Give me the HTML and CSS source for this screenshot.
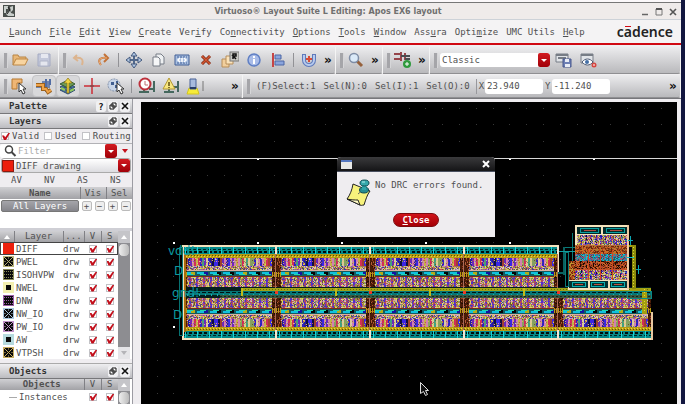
FILE: index.html
```html
<!DOCTYPE html>
<html lang="en">
<head>
<meta charset="utf-8">
<title>Virtuoso® Layout Suite L Editing: Apos EX6 layout</title>
<link rel="stylesheet" href="styles.css">
</head>
<body>
<div class="window">
  <header class="titlebar">
    <svg class="app-icon" width="12" height="12" viewBox="0 0 12 12"><rect width="12" height="12" fill="#4a4f4c"/><path d="M1 1h4v3H3v4H1zM7 2l3-1v4L8 7zM3 9l4-4 1 3 3 1v2H5z" fill="#c9cecb"/><path d="M5 2l2 3-3 4" stroke="#222" fill="none"/></svg>
    <h1>Virtuoso® Layout Suite L Editing: Apos EX6 layout</h1>
    <div class="win-buttons">
      <button aria-label="Minimize"><svg width="8" height="8"><path d="M1 6.500h6" stroke="#666" stroke-width="1.500"/></svg></button>
      <button aria-label="Maximize"><svg width="8" height="8"><path d="M1 1h6v6H1z" stroke="#777" fill="none"/><path d="M1 1h6" stroke="#555" stroke-width="2"/></svg></button>
      <button aria-label="Close window"><svg width="8" height="8"><path d="M1 1l6 6M7 1L1 7" stroke="#555" stroke-width="1.600"/></svg></button>
    </div>
  </header>
  <nav class="menubar">
    <button><u>L</u>aunch</button><button><u>F</u>ile</button><button><u>E</u>dit</button><button><u>V</u>iew</button><button><u>C</u>reate</button><button>Ver<u>i</u>fy</button><button>Co<u>n</u>nectivity</button><button><u>O</u>ptions</button><button><u>T</u>ools</button><button><u>W</u>indow</button><button>Ass<u>u</u>ra</button><button>Opti<u>m</u>ize</button><button>UMC Utils</button><button><u>H</u>elp</button>
    <span class="logo">c<span class="bar">a</span>dence</span>
  </nav>

  <div class="toolbar">
    <div class="group">
      <i class="grip"></i>
      <button aria-label="Open"><svg width="18" height="18"><path d="M2 14V4h5l1 2h7v3" fill="#e9b878" stroke="#b98545"/><path d="M2 14l3-6h12l-3 6z" fill="#f8d4a0" stroke="#bd8744"/></svg></button>
      <button aria-label="Save"><svg width="18" height="18"><path d="M3 3h12v12H3z" fill="#c3c8da" stroke="#a4aac2"/><path d="M6 3h7v4H6z" fill="#e6e8f0"/><path d="M5 10h8v5H5z" fill="#e4e6ee" stroke="#b0b5c8"/></svg></button>
    </div>
    <div class="group">
      <i class="grip"></i>
      <button aria-label="Undo"><svg width="18" height="18"><path d="M7 4L4 7l4 3M5 7c6-1 9 1 7 7" fill="none" stroke="#dcb48e" stroke-width="2"/></svg></button>
      <button aria-label="Redo"><svg width="18" height="18"><path d="M10 3l4 4-4 4M13 7C6 6 3 9 7 14" fill="none" stroke="#c27238" stroke-width="2"/><path d="M13 7C6 6 3 9 7 14" fill="none" stroke="#f1b27a"/></svg></button>
      <i class="sep"></i>
      <button aria-label="Move"><svg width="18" height="18"><path d="M9 2v14M2 9h14" stroke="#52698c" stroke-width="2"/><path d="M9 1l3 4H6zM9 17l3-4H6zM1 9l4-3v6zM17 9l-4-3v6z" fill="#b2c8e4" stroke="#43597d"/></svg></button>
      <button aria-label="Copy"><svg width="18" height="18"><path d="M7 3h5l3 3v7H7z" fill="#eef0f2" stroke="#777d86"/><path d="M4 6h5l2 2v7H4z" fill="#f6f7f8" stroke="#777d86"/></svg></button>
      <button aria-label="Stretch"><svg width="18" height="18"><path d="M2 4h14v10H2z" fill="#a9bfe0" stroke="#415f96"/><path d="M4 6h10M4 12h10" stroke="#415f96" stroke-dasharray="2 1"/><path d="M7 7L5 9l2 2M11 7l2 2-2 2M9 7v4" fill="none" stroke="#fff" stroke-width="1.500"/></svg></button>
      <button aria-label="Delete"><svg width="18" height="18"><path d="M5 5l8 8M13 5l-8 8" stroke="#7e2613" stroke-width="3"/><path d="M5 5l8 8M13 5l-8 8" stroke="#d25832" stroke-width="1.500"/></svg></button>
      <button aria-label="Repeat copy"><svg width="18" height="18"><path d="M1 8h7v8H1z" fill="#f1cf9d" stroke="#b78e5b"/><path d="M5 5h7v8H5z" fill="#fae3bb" stroke="#b78e5b"/><rect x="9" y="1" width="9" height="9" fill="#c9c9c4" stroke="#777"/><path d="M12 8V3h3v2h-3l3 3" fill="none" stroke="#111" stroke-width="1.500"/></svg></button>
      <button aria-label="Properties"><svg width="18" height="18"><circle cx="9" cy="9" r="6" fill="#a9bce8" stroke="#5f7fc4" stroke-width="1.500"/><path d="M9 8v5M9 5v2" stroke="#fff" stroke-width="2"/></svg></button>
      <button aria-label="Align"><svg width="18" height="18"><path d="M4 2v14" stroke="#c64545" stroke-width="2"/><path d="M6 4h6v4H6zM6 10h9v4H6z" fill="#8aa4dc" stroke="#4d66a5"/></svg></button>
      <i class="sep"></i>
      <button aria-label="Snap"><svg width="18" height="18"><path d="M4 3v6a5 5 0 0 0 10 0V3" fill="none" stroke="#5f7abb" stroke-width="4"/><path d="M4 4v5a5 5 0 0 0 10 0V4" fill="none" stroke="#b8cbee" stroke-width="2"/><path d="M9 5v6M6 8h6" stroke="#d84b36" stroke-width="2"/></svg></button>
      <button class="more" aria-label="More edit tools">»</button>
    </div>
    <div class="group">
      <i class="grip"></i>
      <button aria-label="Zoom"><svg width="18" height="18"><path d="M10 10l5 5" stroke="#96613c" stroke-width="3"/><circle cx="7" cy="7" r="4.500" fill="#dbeaf8" stroke="#7e8da6" stroke-width="1.500"/></svg></button>
      <button class="more" aria-label="More zoom tools">»</button>
    </div>
    <div class="group">
      <i class="grip"></i>
      <button aria-label="Create wire"><svg width="20" height="18"><path d="M1 3h7M1 8h7M8 1v9M12 2v7" stroke="#96444a" stroke-width="2"/><path d="M8 5h9M12 8h5" stroke="#4a4d50" stroke-width="2"/><circle cx="14" cy="13" r="4" fill="#2f9a3d"/><path d="M14 11v4M12 13h4" stroke="#fff"/></svg></button>
      <button class="more" aria-label="More create tools">»</button>
    </div>
    <div class="group last">
      <i class="grip"></i>
      <label class="combo workspace"><select aria-label="Workspace"><option>Classic</option></select><span class="arrow"></span></label>
      <button aria-label="Save workspace"><svg width="18" height="18"><path d="M1 3h12v8H1z" fill="#e1e4e8" stroke="#777d86"/><path d="M1 4h12M3 7h8" stroke="#777d86" stroke-width="2"/><path d="M8 8h8v8H8z" fill="#6e80b5" stroke="#46578c"/><path d="M10 8h4v3h-4zM10 13h5v3h-5z" fill="#e9edf6"/></svg></button>
      <button aria-label="Hide workspace"><svg width="18" height="18"><path d="M2 3h12v9H2z" fill="#e1e4e8" stroke="#777d86"/><path d="M2 4h12" stroke="#777d86" stroke-width="2"/><path d="M3 11c3-4 8-4 11 0-3 4-8 4-11 0z" fill="#fff" stroke="#4d5b75"/><circle cx="8" cy="11" r="2" fill="#446fa6"/><circle cx="15" cy="14" r="2.500" fill="#d54741"/><path d="M14 14h2" stroke="#fff"/></svg></button>
    </div>
  </div>

  <div class="toolbar status">
    <div class="group modes">
      <i class="grip"></i>
      <button aria-label="Partial select"><svg width="20" height="18"><path d="M2 2h10v4H7v6H2z" fill="#efb675" stroke="#b67830"/><path d="M9 6v9l2-2 2 4 2-1-2-4h3z" fill="#fff" stroke="#333"/></svg></button>
      <button class="on" aria-label="Route mode"><svg width="20" height="18"><path d="M2 9h14M8 6h8" stroke="#7084ad" stroke-width="4"/><path d="M12 2v13M16 2v6" stroke="#526da4" stroke-width="2"/><path d="M2 8h7v4h3l2 3 3-2" fill="none" stroke="#9e621c" stroke-width="4"/><path d="M2 8h7v4h3l2 3 3-2" fill="none" stroke="#f0a44a" stroke-width="2"/></svg></button>
      <button class="on" aria-label="Stack mode"><svg width="20" height="18"><path d="M2 13l8-4 7 4-7 4zM2 10l8-4 7 4-7 4z" fill="#486f9d" stroke="#2c4b6e"/><path d="M2 7l8-4 7 4-7 4z" fill="#6c9a58" stroke="#365b31"/><path d="M9 16V6H6l4-5 4 5h-3v10z" fill="#f0d541" stroke="#8d7514" stroke-width=".7"/><path d="M3 11l4 2M12 14l4-2" stroke="#92cb5c" stroke-width="2"/></svg></button>
      <button aria-label="Crosshair"><svg width="20" height="18"><path d="M10 1v16M2 9h16" stroke="#cb2c36" stroke-width="1.500"/><path d="M8 9h4" stroke="#555"/></svg></button>
      <button aria-label="Area select"><svg width="20" height="18"><circle cx="8" cy="8" r="6" fill="#c8d5e8" stroke="#7f8fa8" stroke-dasharray="2 1"/><path d="M5 5h3v3H5zM9 8h3v3H9zM10 4h2v2h-2z" fill="#405f91"/><path d="M11 6v9l2-2 2 4 2-1-2-4h3z" fill="#fff" stroke="#333"/></svg></button>
      <i class="sep"></i>
      <button aria-label="DRC notify"><svg width="20" height="18"><path d="M2 15h10M7 11v4M12 12h5M17 4v11" stroke="#45685e" stroke-width="2"/><circle cx="8" cy="7" r="5.500" fill="#fff" stroke="#bd303b" stroke-width="2"/><path d="M8 4v4h3" stroke="#bd7075" fill="none"/></svg></button>
      <button aria-label="DRC warning"><svg width="20" height="18"><path d="M3 15h10M8 12v3M12 10h5M17 4v11" stroke="#45685e" stroke-width="2"/><path d="M8 1l6 11H2z" fill="#f7e780" stroke="#b59931"/><path d="M8 5v4M8 10v1" stroke="#5f4c10" stroke-width="1.500"/></svg></button>
      <button aria-label="Highlight"><svg width="20" height="18"><path d="M4 11h8l2 6H2z" fill="#f7ec38" stroke="#d4c51e"/><path d="M5 2h6v10H5z" fill="#a7badd" stroke="#4a6296"/><path d="M5 11h6" stroke="#283c69" stroke-width="2"/><path d="M18 4v10" stroke="#777"/></svg></button>
      <button class="more" aria-label="More modes">»</button>
    </div>
    <div class="group last readout">
      <i class="grip"></i>
      <span>(F)Select:1</span><span>Sel(N):0</span><span>Sel(I):1</span><span>Sel(O):0</span>
      <label class="coord"><span>X</span><input value="23.940"></label>
      <label class="coord y"><span>Y</span><input value="-11.240"></label>
      <button class="more end" aria-label="More readouts">»</button>
    </div>
  </div>

  <main class="workspace-area">
    <aside class="sidebar">
      <div class="dock-title"><h2>Palette</h2><button aria-label="Help">?</button><button aria-label="Float palette"><svg width="8" height="8"><path d="M3 1h4v4H3zM1 3h4v4H1z" fill="#fff" stroke="#111"/></svg></button><button aria-label="Close palette"><svg width="8" height="8"><path d="M1 1l6 6M7 1L1 7" stroke="#111" stroke-width="1.600"/></svg></button></div>
      <div class="dock-title"><h2>Layers</h2><button aria-label="Float layers"><svg width="8" height="8"><path d="M3 1h4v4H3zM1 3h4v4H1z" fill="#fff" stroke="#111"/></svg></button><button aria-label="Close layers"><svg width="8" height="8"><path d="M1 1l6 6M7 1L1 7" stroke="#111" stroke-width="1.600"/></svg></button></div>
      <div class="filters"><label><input type="checkbox" checked>Valid</label><label><input type="checkbox">Used</label><label><input type="checkbox">Routing</label></div>
      <div class="search">
        <label class="combo"><svg width="14" height="12"><circle cx="6" cy="4.500" r="3.500" fill="none" stroke="#444" stroke-width="1.500"/><path d="M8.500 7l4 4" stroke="#444" stroke-width="2"/></svg><input placeholder="Filter" aria-label="Filter"><span class="arrow"></span></label>
        <button class="small-arrow" aria-label="Filter options"></button>
      </div>
      <label class="combo current"><i class="swatch red"></i><select aria-label="Current layer"><option>DIFF drawing</option></select><span class="arrow"></span></label>
      <div class="quick"><button>AV</button><button>NV</button><button>AS</button><button>NS</button></div>
      <table class="sets">
        <thead><tr><th>Name</th><th colspan="2">Vis</th><th colspan="2">Sel</th></tr></thead>
        <tbody><tr><td><button class="all">All Layers</button></td><td><button aria-label="Show all">+</button></td><td><button aria-label="Hide all">−</button></td><td><button aria-label="Enable all">+</button></td><td><button aria-label="Disable all">−</button></td></tr></tbody>
      </table>
      <div class="list layers">
        <table>
          <thead><tr><th class="c-sw"><i class="sort"></i></th><th>Layer</th><th class="c-p">...</th><th class="c-v">V</th><th class="c-v">S</th></tr></thead>
          <tbody id="layer-rows"></tbody>
        </table>
        <div class="scroll"><i class="up"></i><i class="thumb"></i><i class="down"></i></div>
      </div>
      <div class="dock-title objects"><h2>Objects</h2><button aria-label="Float objects"><svg width="8" height="8"><path d="M3 1h4v4H3zM1 3h4v4H1z" fill="#fff" stroke="#111"/></svg></button><button aria-label="Close objects"><svg width="8" height="8"><path d="M1 1l6 6M7 1L1 7" stroke="#111" stroke-width="1.600"/></svg></button></div>
      <div class="list">
        <table>
          <thead><tr><th class="strong">Objects</th><th class="c-v">V</th><th class="c-v">S</th></tr></thead>
          <tbody><tr><td class="tree">Instances</td><td class="c-v"><input type="checkbox" checked aria-label="Instances visible"></td><td class="c-v"><input type="checkbox" checked aria-label="Instances selectable"></td></tr></tbody>
        </table>
        <div class="scroll"><i class="up"></i><i class="thumb"></i></div>
      </div>
    </aside>
    <section class="canvas">
      <svg id="layout" class="drawing" width="537" height="302" viewBox="141 102 537 302" shape-rendering="crispEdges"></svg>
      <div class="dialog" role="dialog" aria-label="DRC result">
        <div class="dialog-title">
          <svg width="11" height="9"><rect width="11" height="9" fill="#e9e9e6"/><rect width="11" height="2" fill="#5578c0"/></svg>
          <button aria-label="Close dialog"><svg width="8" height="8"><path d="M1 1l6 6M7 1L1 7" stroke="#fff" stroke-width="2"/></svg></button>
        </div>
        <div class="dialog-body">
          <svg width="26" height="28" viewBox="0 0 26 28"><path d="M7 5l17 7c-3 4-4 8-6 14-2 0-3 1-4 0L1 20C4 16 6 11 7 5z" fill="#f7f27c" stroke="#222"/><path d="M1 20c4 1 8 1 11 1l2 5z" fill="#fffbc4" stroke="#222"/><path d="M12 15l6-5" stroke="#666"/><ellipse cx="18" cy="11" rx="4.500" ry="3" fill="#258c91" stroke="#0c4a50"/><path d="M16 4h5l-1 7h-4z" fill="#2fa5a8"/><ellipse cx="18.500" cy="4" rx="4.500" ry="3" fill="#36a9ac" stroke="#0c4a50"/><path d="M16 3h3" stroke="#b3f0ee"/></svg>
          <p>No DRC errors found.</p>
          <button class="close"><u>C</u>lose</button>
        </div>
      </div>
    </section>
  </main>
</div>
<script src="layout.js"></script>
</body>
</html>
```
FILE: styles.css
```css
* { box-sizing: border-box; }
body {
  margin: 0;
  background: #12163f;
  color: #505050;
  font: 9px/12px "DejaVu Sans Mono", "Liberation Mono", monospace;
}
button, input, select { font: inherit; color: inherit; margin: 0; padding: 0; border: 0; background: none; border-radius: 0; }
button svg, .app-icon { display: block; }
h1, h2, p { margin: 0; }
.window {
  display: flex;
  flex-direction: column;
  height: 100vh;
  margin-right: 4px;
  background: #efedf0;
  border-top: 2px solid #fbf8fa;
  overflow: hidden;
}
.titlebar {
  display: flex;
  align-items: center;
  flex: none;
  height: 18px;
  padding: 0 4px 0 3px;
  border-top: 1px solid #777;
  border-bottom: 1px solid #cdd2d8;
  background: #efebea;
}
.titlebar h1 { flex: 1; text-align: center; color: #707070; font: bold 8px/14px "DejaVu Sans", sans-serif; padding: 2px 0 0 0; }
.win-buttons { display: flex; gap: 6px; padding-top: 2px; }
.menubar {
  display: flex;
  align-items: center;
  flex: none;
  gap: 8px;
  height: 25px;
  padding: 0 8px 0 9px;
  border-bottom: 2px solid #d00812;
  background: #f4f3f4;
  white-space: nowrap;
}
.menubar u { text-underline-offset: 1px; }
.logo { margin-left: auto; color: #222; font: 600 14px/20px "Noto Sans", sans-serif; }
.bar { position: relative; }
.bar::before { content: ""; position: absolute; top: 4px; left: 1px; width: 6px; height: 1px; background: #d00812; }

.toolbar { display: flex; flex: none; height: 29px; padding-top: 2px; background: #f0eff1; }
.toolbar.status { height: 24px; padding-top: 1px; }
.group {
  display: flex;
  align-items: center;
  padding: 0 2px 0 4px;
  border-right: 1px solid #f4f4f4;
  border-bottom: 1px solid #8f8f92;
  border-radius: 0 0 3px 0;
  background: linear-gradient(#ececee, #b9b9bc);
}
.group.last { flex: 1; }
.group button { display: grid; place-items: center; flex: none; width: 24px; height: 22px; }
.group .more { width: 14px; margin-left: auto; color: #111; font: bold 12px/14px "DejaVu Sans", sans-serif; }
.group button.on { background: #d8d8da; border: 1px solid #c3c3c6; border-radius: 4px; }
.grip { flex: none; width: 4px; height: 15px; background: #a5a5a9; border-right: 1px solid #d6d6d8; }
.sep { flex: none; width: 1px; height: 14px; margin: 0 3px; background: #929296; }
.modes { width: 243px; }
.readout > span { margin-left: 2px; margin-right: 6px; }
.readout > span:first-of-type { margin-left: 5px; }
.coord { display: flex; align-items: center; gap: 1px; padding-left: 2px; border-left: 1px solid #98989c; }
.coord.y { border: 0; padding-left: 2px; }
.coord input { width: 58px; height: 15px; padding-left: 2px; background: #fff; border-radius: 3px; }

.combo { display: flex; align-items: center; min-width: 0; background: #fff; border-radius: 3px; overflow: hidden; }
.combo select, .combo input { flex: 1; min-width: 0; height: 100%; appearance: none; outline: 0; }
.arrow { display: grid; place-items: center; flex: none; align-self: stretch; width: 12px; background: linear-gradient(#d21a20, #a00008); border-radius: 2px; }
.arrow::before { content: ""; border: 3px solid transparent; border-top: 3px solid #fff; border-bottom: 0; }
.group:nth-child(-n+4) .more { margin-right: -2px; }
.workspace { width: 110px; height: 14px; margin: 0 2px; }
.workspace select { padding-left: 2px; }

.workspace-area { display: flex; flex: 1; min-height: 0; border-top: 1px solid #77777b; }
.sidebar {
  display: flex;
  flex-direction: column;
  flex: none;
  width: 133px;
  border-right: 1px solid #9c9ca3;
  overflow: hidden;
}
.dock-title {
  display: flex;
  align-items: center;
  flex: none;
  gap: 2px;
  height: 15px;
  padding: 0 2px 0 9px;
  border-bottom: 1px solid #77777a;
  background: linear-gradient(#eeeef0, #bcbcc0);
}
.dock-title h2 { flex: 1; font: bold 9px/12px "DejaVu Sans Mono", monospace; color: #333; }
.dock-title button { display: grid; place-items: center; width: 10px; height: 11px; border-radius: 2px; background: #f0f0f2; color: #111; font-weight: bold; }
input[type="checkbox"] { appearance: none; flex: none; width: 8px; height: 8px; background: #fff; border: 1px solid #c2c2c6; }
input[type="checkbox"]:checked::before {
  content: "";
  display: block;
  width: 8px;
  height: 7px;
  background: #c3101c;
  clip-path: polygon(0 35%, 25% 35%, 40% 60%, 80% 0, 100% 0, 50% 100%, 25% 100%);
}
.filters { display: flex; flex: none; gap: 5px; height: 14px; padding-left: 1px; align-items: center; white-space: nowrap; overflow: hidden; }
.filters label { display: flex; align-items: center; gap: 3px; }
.search { display: flex; flex: none; height: 15px; border-top: 1px solid #b2b2b6; }
.search .combo { flex: 1; padding-left: 3px; }
.search input { padding-left: 1px; }
.search input::placeholder { color: #aaa; opacity: 1; }
.small-arrow { display: grid; place-items: center; width: 15px; }
.small-arrow::before { content: ""; border: 3px solid transparent; border-top: 4px solid #c3101c; border-bottom: 0; }
.current { flex: none; height: 15px; margin: 0 1px; border: 1px solid #aaa; background: linear-gradient(#fff, #dcdce0); }
.swatch { width: 12px; height: 12px; flex: none; }
.red { background: #ec1f0c; border: 1px solid #8a1a10; }
.current select { padding-left: 2px; }
.quick { display: flex; flex: none; height: 14px; justify-content: space-around; align-items: center; }
table { width: 100%; border-collapse: collapse; table-layout: fixed; }
th, td { padding: 0; font-weight: normal; height: 13px; line-height: 12px; }
thead { background: linear-gradient(#d0d0d3, #a2a2a6); }
th + th { border-left: 1px solid #808085; }
.sets { flex: none; }
.sets th { width: 26px; height: 12px; }
.sets th:first-child { width: 80px; font-weight: bold; }
.sets td { height: 14px; background: #fff; }
.sets td button { display: block; margin: auto; width: 10px; height: 10px; line-height: 8px; border: 1px solid #bbb; border-radius: 2px; background: #eee; }
.sets td .all { width: 78px; height: 12px; line-height: 10px; color: #fff; border-color: #777; background: linear-gradient(#a5a5aa, #85858b); }
.list { display: flex; flex: none; background: #fff; }
.layers { margin-top: 15px; border-top: 3px solid #cfcfd5; box-shadow: 0 -15px #fff; }
.list table { flex: 1; width: 0; height: 1px; }
.list th { height: 11px; line-height: 11px; }
.c-sw { width: 14px; }
.c-p { width: 21px; }
.c-v { width: 17px; text-align: center; }
.c-v input { display: block; margin: auto; }
.c-sw svg { display: block; margin-left: 3px; }
.layers td { height: 13px; }
.layers td:nth-child(2) { padding-left: 2px; }
.layers tr.selected { outline: 1px solid #444; outline-offset: -1px; }
.sort, .up, .down { display: grid; place-items: center; }
.sort::before, .up::before { content: ""; border: 3px solid transparent; border-bottom: 4px solid #fff; border-top: 0; }
.scroll { display: flex; flex-direction: column; width: 12px; margin-right: 2px; background: #8d8d91; }
.up, .down { height: 12px; flex: none; background: #c5c5c9; }
.down { margin-top: auto; background: #e5e5e8; }
.down::before { content: ""; border: 3px solid transparent; border-top: 4px solid #b4b4b8; border-bottom: 0; }
.thumb { height: 14px; flex: none; border: 1px solid #8f8f94; border-radius: 5px; background: linear-gradient(90deg, #eee, #bbb); }
.objects { margin-top: 4px; height: 16px; border-top: 1px solid #aaa; }
.strong { font-weight: bold; }
.list .strong { font-weight: bold; }
.tree { padding-left: 9px; white-space: nowrap; }
.tree::before { content: ""; display: inline-block; width: 8px; height: 1px; margin-right: 2px; background: #aaa; vertical-align: middle; }

.canvas { position: relative; flex: 1; min-width: 0; margin: 3px 4px 0 8px; background: #000; overflow: hidden; }
.drawing { display: block; }
.dialog { position: absolute; left: 196px; top: 55px; width: 158px; background: #efedf0; border-radius: 4px 4px 0 0; overflow: hidden; }
.dialog-title { display: flex; justify-content: space-between; align-items: center; height: 15px; padding: 0 5px 0 4px; background: linear-gradient(#3a3a3c, #151517); border-bottom: 1px solid #4a5060; }
.dialog-body { display: grid; grid-template-columns: auto 1fr; column-gap: 3px; padding: 7px 9px 10px; }
.dialog-body p { white-space: nowrap; }
.close { grid-column: 1 / 3; justify-self: center; width: 46px; height: 14px; margin-top: 6px; border: 1px solid #7c0a0e; border-radius: 7px; background: linear-gradient(#d0141a, #a40006); color: #fff; font-weight: bold; line-height: 11px; }
```
FILE: layout.js
```js
// Layer palette rows: name, frame colour, fill pattern.
const layers = [
  ["DIFF", "#ec1f0c", "solid"], ["PWEL", "#b8b37a", "cross"], ["ISOHVPW", "#8a8a55", "dots"],
  ["NWEL", "#f3efb0", "box"], ["DNW", "#9a5ca8", "dots"], ["NW_IO", "#a8c4dc", "cross"],
  ["PW_IO", "#c092c8", "cross"], ["AW", "#b6dade", "box"], ["VTPSH", "#c8ad62", "cross"]
];
function swatch(c, kind) {
  const art = {
    solid: `<rect width="11" height="11" fill="${c}"/>`,
    cross: `<path d="M1 1l9 9M10 1l-9 9" stroke="${c}"/><path d="M5 2h1M5 9h1M2 5v1M9 5v1" stroke="${c}"/>`,
    dots: `<path d="M1 2.500h9M1 5.500h9M1 8.500h9" stroke="${c}" stroke-dasharray="1 1"/>`,
    box: `<rect x="1.500" y="1.500" width="8" height="8" fill="none" stroke="${c}" stroke-width="3"/>`
  };
  return `<svg width="11" height="11"><rect width="11" height="11" fill="#0a0a0a"/>${art[kind]}<rect x=".5" y=".5" width="10" height="10" fill="none" stroke="${c}"/></svg>`;
}
document.getElementById("layer-rows").innerHTML = layers.map(([name, c, kind], i) =>
  `<tr class="${i ? "" : "selected"}"><td class="c-sw">${swatch(c, kind)}</td><td>${name}</td><td>drw</td>` +
  ["visible", "selectable"].map(k => `<td class="c-v"><input type="checkbox" checked aria-label="${name} ${k}"></td>`).join("") + "</tr>"
).join("");

// Mask drawing: rectangles are collected per colour, in paint order.
const out = [];
const rect = (x, y, w, h, c) => out.push([c, `M${x} ${y}h${w}v${h}h${-w}z`]);
const frame = (x, y, w, h, t, c) => { rect(x, y, w, t, c); rect(x, y + h - t, w, t, c); rect(x, y, t, h, c); rect(x + w - t, y, t, h, c); };
let seed = 7;
const rnd = () => (seed = (seed * 16807) % 2147483647) / 2147483647;
const pick = a => a[Math.floor(rnd() * a.length)];

// Grid dots
for (let i = -1; i < 32; i++) for (let j = -8; j < 11; j++) {
  const major = i % 5 === 0 && j % 5 === 0;
  rect(Math.round(173.3 + i * 16.8), Math.round(242 + j * 16.8), major ? 2 : 1, major ? 2 : 1, major ? "#fff" : "#383838");
}
rect(141, 158, 537, 1, "#d8d8d8");

const speck = ["#d0bc48", "#a89a3c", "#e0b88c", "#8a9a50", "#9a55c0", "#c8405c", "#d0d0c0", "#6a5a28", "#3c3ca0", "#dcd860", "#a0705c", "#c890b0"];
const cols = ["#3a26e4", "#d02c58", "#86a060", "#c4b444", "#6c28b8", "#dcc898", "#3020c0", "#a04030", "#d080b0", "#40a080", "#2818a0", "#101040"];
// One standard cell, as a list of [x, y, w, h, colour] from the outer rail inward
function makeCell(w) {
  const a = [];
  a.push([0, 2, w, 7, "#048888"]);
  for (let x = 1; x < w; x += 5) { a.push([x, 4, 3, 1, "#022222"]); a.push([x + 1, 6, 3, 2, "#020c0c"]); }
  for (let x = 3; x < w; x += 12) a.push([x, 2, 1, 8, "#18d4d8"]);
  a.push([0, 9, w, 4, "#b89c10"]);
  for (let x = 0; x < w; x += 3) a.push([x, 10, 1, 1, "#5b4b04"], [x + 1, 11, 1, 1, "#ecd63c"]);
  for (let x = 0; x < w; x += 2) {
    a.push([x, 13, 2, 8, pick(cols)]);
    for (let y = 13; y < 21; y++) if (rnd() < .35) a.push([x + (rnd() < .5 ? 0 : 1), y, 1, 1, pick(speck)]);
  }
  for (let x = 0; x < w; x++) for (let y = 21; y < 26; y++) a.push([x, y, 1, 1, pick(speck)]);
  a.push([0, 25, w, 1, "#dcb0a0"]);
  a.push([0, 26, w, 5, "#145c60"]);
  for (let x = 2; x < w; x += 13) { a.push([x, 27, 8, 2, "#10c0e0"], [x + 7, 27, 4, 3, pick(["#1414a0", "#050505", "#b4ac18"])], [x + 3, 29, 6, 1, "#20d8b0"]); }
  a.push([0, 31, w, 1, "#7d2c18"]);
  for (let x = 0; x < w; x++) for (let y = 32; y < 42; y++) a.push([x, y, 1, 1, x % 7 < 2 ? pick(["#5030c8", "#b04860"]) : pick(speck)]);
  for (const s of [[0, 5], [w - 4, 4]]) {
    a.push([s[0], 13, s[1], 29, "#4a1c08"]);
    for (let k = 0; k < 50; k++) a.push([s[0] + Math.floor(rnd() * s[1]), 13 + Math.floor(rnd() * 29), 1, 1, pick(["#9a4020", "#1a0a02", "#b25a38", "#2c1004"])]);
    for (let x = 0; x < s[1]; x += 2) a.push([s[0] + x, 27, 1, 5, "#b89c10"]);
  }
  return a;
}
const cell = makeCell(94);
const place = (x0, top, flip, maxX) => cell.forEach(([x, y, w, h, c]) => {
  const X = x0 + x, W = Math.min(w, maxX - X);
  if (W > 0) rect(X, flip ? top - y - h : top + y, W, h, c);
});
for (let k = 0; k < 4; k++) place(182 + k * 94, 245, false, 558);
for (let k = 0; k < 5; k++) place(182 + k * 94, 340, true, 651);
// Shared ground rail
rect(182, 287, 469, 11, "#06201e");
rect(241, 288, 410, 3, "#a2a414");
for (let x = 242; x < 650; x += 3) rect(x, 289, 1, 1, "#5d6808");
rect(182, 291, 469, 4, "#067676");
for (let x = 184; x < 650; x += 6) { rect(x, 292, 4, 1, "#021212"); rect(x + 3, 294, 1, 2, "#10b4b4"); }
rect(220, 295, 431, 3, "#385840");
for (let x = 220; x < 650; x += 4) rect(x, 296, 2, 1, "#16281c");
for (let k = 0; k < 4; k++) rect(241 + k * 94, 288, 2, 8, "#c0bc18");
// Rails and cell boundaries
rect(182, 245, 377, 2, "#f5e3bd");
rect(182, 338, 471, 2, "#f5e3bd");
rect(182, 245, 2, 95, "#f5e3bd");
rect(184, 254, 2, 78, "#a86c0c");
rect(557, 245, 2, 27, "#f5e3bd");
rect(651, 312, 2, 28, "#e8c8a0");
for (const x of [275, 369, 463, 557]) {
  rect(x, 246, 2, 8, "#f4e6d0"); rect(x, 254, 1, 34, "#a96a58"); rect(x, 298, 1, 32, "#a96a58"); rect(x, 330, 2, 9, "#f4e6d0");
  rect(x, 291, 3, 3, "#ee3a28");
}
frame(179, 247, 4, 89, 1, "#087272");
// Level shifter block above the right end
rect(563, 247, 12, 1, "#0a7a78"); rect(563, 247, 2, 28, "#0a6260"); rect(558, 272, 7, 2, "#0a6260");
rect(572, 233, 1, 28, "#0a7a78"); rect(559, 251, 17, 1, "#10a0a0");
rect(575, 225, 54, 9, "#032a2a");
for (const x of [580, 606]) { frame(x, 228, 19, 5, 1, "#0ca0a0"); rect(x + 4, 230, 12, 1, "#b04c3c"); }
for (let x = 575; x < 628; x++) for (let y = 234; y < 281; y++) {
  let pal = y < 245 ? speck : y < 254 ? ["#b2481a", "#d46828", "#6a2408", "#843a20", "#a97c30"] : y < 261 ? ["#0ca0b0", "#10c8d0", "#a85468", "#4060a0", "#32545c"] : y < 270 ? ["#b2481a", "#d46828", "#6a2408", "#aa4838", "#1c0c04"] : speck;
  if (pal === speck && x % 5 < 2) pal = cols;
  rect(x, y, 1, 1, pick(pal));
}
for (let x = 568; x < 575; x++) for (let y = 261; y < 281; y++) rect(x, y, 1, 1, pick(["#b2481a", "#6a2408", "#c09030"]));
rect(568, 281, 60, 8, "#033232");
for (const x of [572, 591, 611]) { frame(x, 282, 14, 5, 1, "#0cb0b0"); rect(x + 3, 284, 8, 1, "#c05040"); }
for (const x of [588, 608]) rect(x, 281, 2, 8, "#f5e3bd");
frame(575, 225, 54, 10, 1, "#f5e3bd"); rect(575, 225, 54, 2, "#f5e3bd");
rect(575, 245, 54, 1, "#b86a3c"); rect(575, 269, 54, 1, "#c8522a");
frame(568, 280, 61, 10, 1, "#f5e3bd"); rect(568, 288, 61, 2, "#f5e3bd");
rect(601, 226, 2, 9, "#f5e3bd"); rect(575, 225, 2, 20, "#f5e3bd"); rect(627, 225, 2, 64, "#eec8a0");
for (const x of [588, 600, 612]) rect(x, 250, 1, 30, "#cc4820");
rect(629, 245, 7, 2, "#a49e10"); rect(632, 245, 4, 45, "#8c8a0c"); rect(632, 289, 14, 3, "#a49e10"); rect(642, 289, 5, 25, "#a49e10");
for (let y = 247; y < 312; y += 3) rect(y < 289 ? 633 : 644, y, 1, 1, "#e0dc30");
for (const [x, y] of [[630, 240], [638, 269]]) { rect(x, y - 4, 1, 9, "#0aa8b4"); rect(x - 2, y, 5, 1, "#0aa8b4"); }
rect(626, 257, 8, 1, "#10c0c8");
frame(565, 252, 4, 35, 1, "#0a7a78");
frame(627, 291, 25, 8, 1, "#0b8886");

let svg = "", current = "", d = "";
for (const [c, p] of out) {
  if (c !== current) { if (d) svg += `<path fill="${current}" d="${d}"/>`; current = c; d = ""; }
  d += p;
}
svg += `<path fill="${current}" d="${d}"/>`;
// Pin labels and the mouse pointer
svg += `<g fill="#0a9aa0" font-family="DejaVu Sans, sans-serif" font-size="12"><text x="168" y="255">vdd!</text><text x="174" y="275">D</text><text x="172" y="297">gnd!</text><text x="173" y="319">D</text></g>`;
svg += `<path d="M420.500 382.500v11l3-2 2 4 2-1-2-4h3z" fill="#111" stroke="#ddd" shape-rendering="auto"/>`;
document.getElementById("layout").innerHTML = svg;
```
